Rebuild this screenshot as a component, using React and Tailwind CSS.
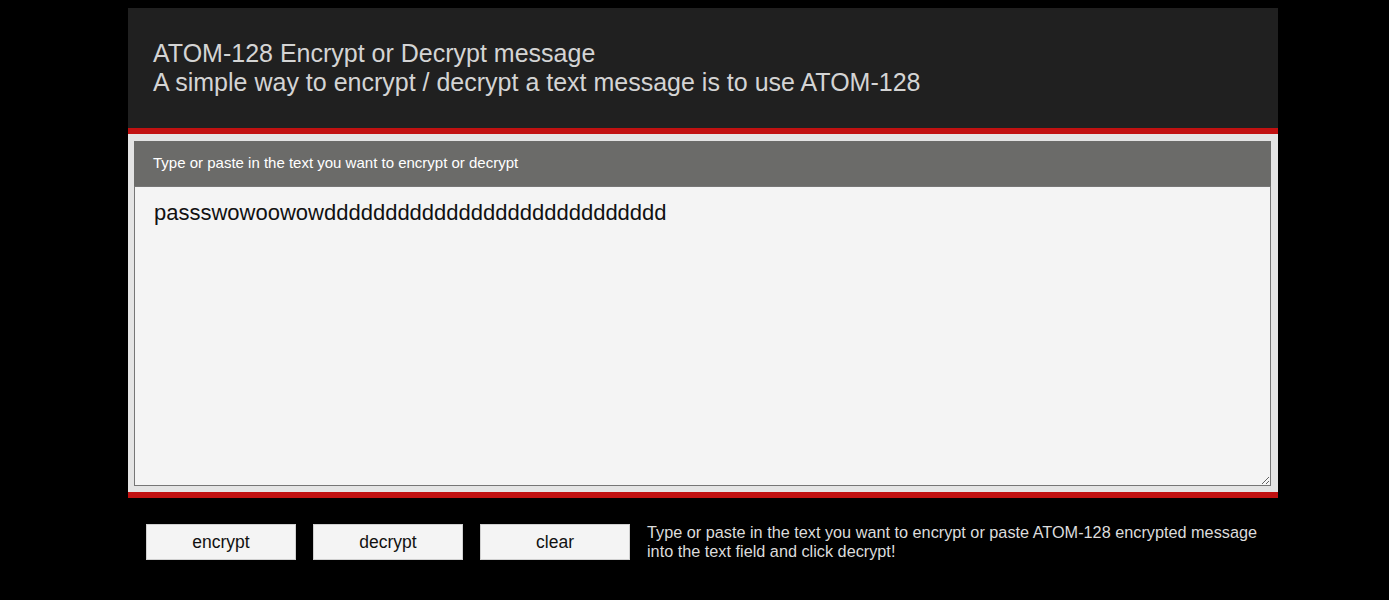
const typed = 'passswowoowow' + 'd'.repeat(28)

export default function App() {
  return (
    <div className="min-h-[600px] bg-black pt-2 font-['Liberation_Sans',Arial,sans-serif]">
      <div className="ml-[128px] w-[1150px]">
        <div className="h-[120px] bg-[#202020] pl-[25px] pt-[31px] text-[25px] leading-[29px] text-[#d4d4d4]">
          <div>ATOM-128 Encrypt or Decrypt message</div>
          <div>A simple way to encrypt / decrypt a text message is to use ATOM-128</div>
        </div>
        <div className="border-y-[6px] border-[#c11111] bg-[#e4e4e4] pb-[6px] pl-[6px] pr-[7px] pt-[7px]">
          <div className="flex h-[45px] items-center bg-[#6b6b69] pl-[19px] text-[15px] text-white">
            Type or paste in the text you want to encrypt or decrypt
          </div>
          <textarea
            className="block h-[300px] w-full border border-[#767676] bg-[#f4f4f4] px-[19px] pt-[13px] text-[22px] leading-[26px] text-[#111] outline-none"
            defaultValue={typed}
          />
        </div>
        <div className="flex items-center gap-[17px] pl-[18px] pt-[25px]">
          <button className="h-[36px] w-[150px] border border-[#d0d0d0] bg-[#f4f4f4] text-[17.5px] text-[#111]">encrypt</button>
          <button className="h-[36px] w-[150px] border border-[#d0d0d0] bg-[#f4f4f4] text-[17.5px] text-[#111]">decrypt</button>
          <button className="h-[36px] w-[150px] border border-[#d0d0d0] bg-[#f4f4f4] text-[17.5px] text-[#111]">clear</button>
          <p className="w-[620px] text-[16.25px] leading-[19px] text-[#dcdcdc]">
            Type or paste in the text you want to encrypt or paste ATOM-128 encrypted message into the text field and click decrypt!
          </p>
        </div>
      </div>
    </div>
  )
}
